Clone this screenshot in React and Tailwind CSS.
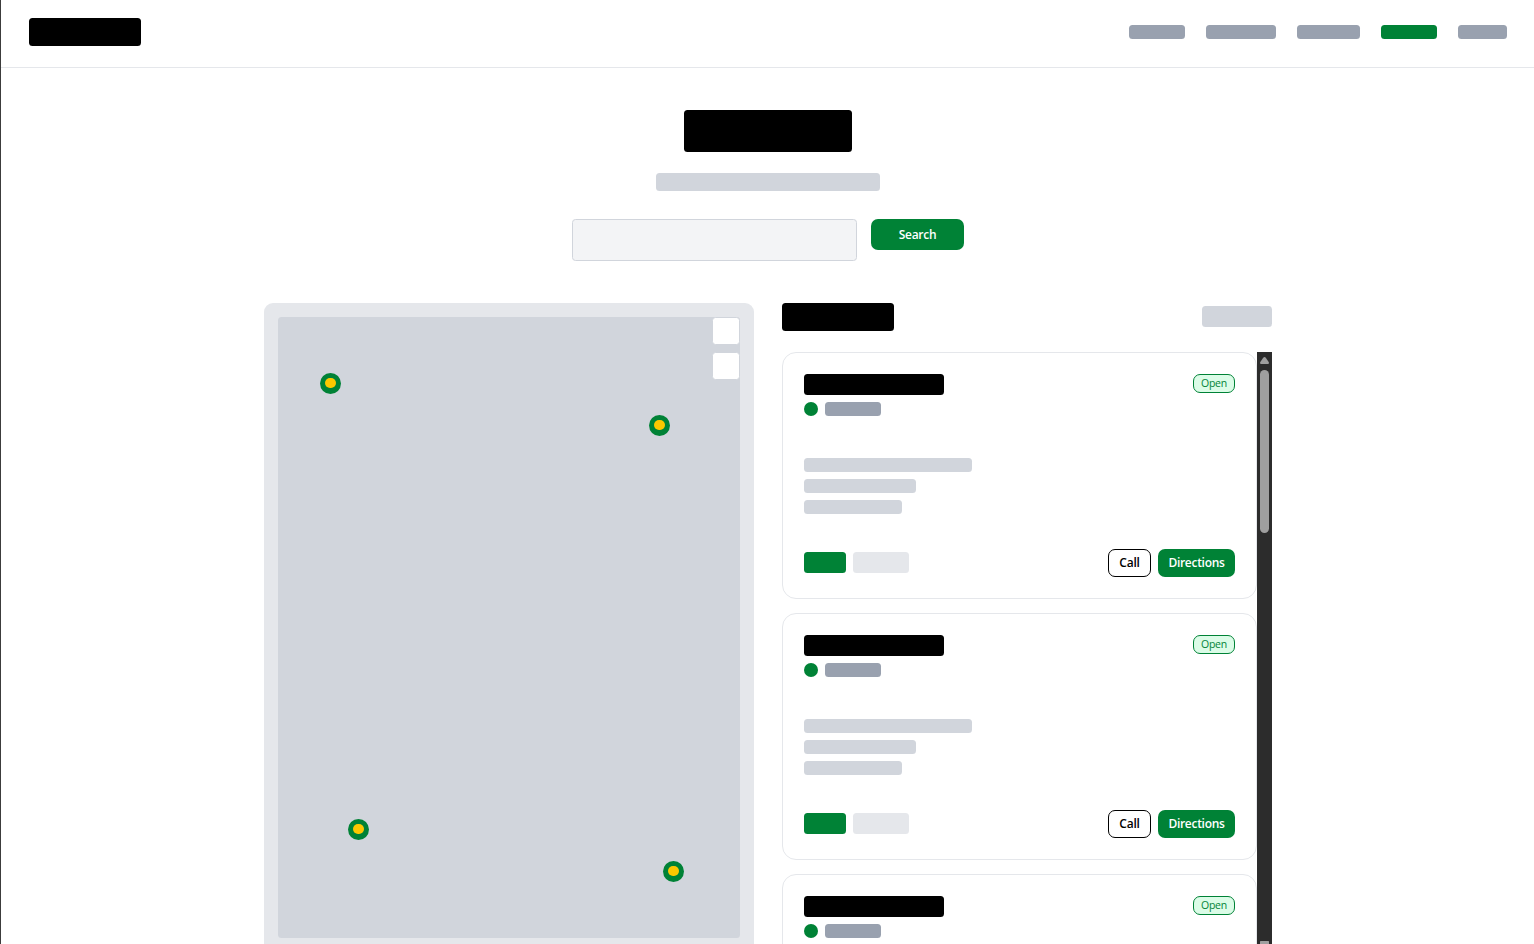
const pins = [
  "left-[42px] top-[56px]",
  "left-[371px] top-[98px]",
  "left-[70px] top-[502px]",
  "left-[385px] top-[544px]",
];

function Header() {
  return (
    <header className="flex h-[68px] shrink-0 items-start justify-between border-b border-gray-200 px-7 pt-[18px]">
      <div className="h-7 w-28 rounded-[3.5px] bg-black" />
      <nav className="flex h-7 items-center gap-[21px]">
        <div className="h-3.5 w-14 rounded-[3.5px] bg-gray-400" />
        <div className="h-3.5 w-[70px] rounded-[3.5px] bg-gray-400" />
        <div className="h-3.5 w-[63px] rounded-[3.5px] bg-gray-400" />
        <div className="h-3.5 w-14 rounded-[3.5px] bg-green-700" />
        <div className="h-3.5 w-[49px] rounded-[3.5px] bg-gray-400" />
      </nav>
    </header>
  );
}

function Hero() {
  return (
    <section className="flex flex-col items-center pt-[42px]">
      <div className="h-[42px] w-[168px] rounded-[3.5px] bg-black" />
      <div className="mt-[21px] h-[18px] w-56 rounded-[3.5px] bg-gray-300" />
      <div className="mt-7 flex items-start gap-3.5">
        <div className="h-[42px] w-[285px] rounded-[3.5px] border border-gray-300 bg-gray-100" />
        <button className="flex h-[31px] w-[93px] items-center justify-center rounded-[7px] bg-green-700 pt-px text-[12px] font-semibold tracking-[-0.3px] text-white">
          Search
        </button>
      </div>
    </section>
  );
}

function StoreMap() {
  return (
    <div className="h-[649px] w-[490px] rounded-[9px] bg-gray-200 p-3.5">
      <div className="relative flex h-[621px] flex-col items-end gap-[7px] rounded-[3.5px] bg-gray-300">
        <div className="size-7 rounded-[3.5px] border border-gray-300 bg-white" />
        <div className="size-7 rounded-[3.5px] border border-gray-300 bg-white" />
        {pins.map((place) => (
          <div key={place} className={"absolute size-[21px] rounded-full bg-green-700 pt-[5px] pl-[5px] " + place}>
            <div className="h-[10px] w-[11px] rounded-full bg-[#fcc800]" />
          </div>
        ))}
      </div>
    </div>
  );
}

function StoreActions() {
  return (
    <div className="mt-[35px] flex items-start justify-between">
      <div className="flex gap-[7px] pt-[3px]">
        <div className="h-[21px] w-[42px] rounded-[3.5px] bg-green-700" />
        <div className="h-[21px] w-14 rounded-[3.5px] bg-gray-200" />
      </div>
      <div className="flex gap-[7px]">
        <button className="flex h-7 w-[43px] items-center justify-center rounded-[7px] border border-black text-[12px] font-semibold tracking-[-0.2px] text-black">
          Call
        </button>
        <button className="flex h-7 w-[77px] items-center justify-center rounded-[7px] bg-green-700 text-[12px] font-semibold tracking-[-0.3px] text-white">
          Directions
        </button>
      </div>
    </div>
  );
}

function StoreCard({ actions = true }) {
  return (
    <article className="flex h-[247px] shrink-0 flex-col rounded-[14px] border border-gray-200 p-[21px]">
      <div className="flex items-start justify-between">
        <div>
          <div className="h-[21px] w-[140px] rounded-[3.5px] bg-black" />
          <div className="mt-[7px] flex gap-[7px]">
            <div className="size-3.5 rounded-full bg-green-700" />
            <div className="h-3.5 w-14 rounded-[3.5px] bg-gray-400" />
          </div>
        </div>
        <span className="flex h-[19px] w-[42px] items-center justify-center rounded-[7px] border border-green-700 bg-green-100 text-[10.5px] font-medium tracking-[-0.25px] text-green-700">
          Open
        </span>
      </div>
      <div className="mt-[42px] flex flex-col gap-[7px]">
        <div className="h-3.5 w-[168px] rounded-[3.5px] bg-gray-300" />
        <div className="h-3.5 w-28 rounded-[3.5px] bg-gray-300" />
        <div className="h-3.5 w-[98px] rounded-[3.5px] bg-gray-300" />
      </div>
      {actions && <StoreActions />}
    </article>
  );
}

function Scrollbar() {
  return (
    <div className="flex w-[15px] flex-col items-center bg-[#2c2c2c] pt-[5px]">
      <svg width="9" height="7" viewBox="0 0 9 7" fill="#9f9f9f">
        <path d="M3.2.8Q4.5-.7 5.8.8L8.7 5Q9.4 7 8 7H1Q-.4 7 .3 5Z" />
      </svg>
      <div className="mt-1.5 h-[163px] w-[9px] rounded-full bg-[#9f9f9f]" />
      <svg className="mt-[408px]" width="9" height="7" viewBox="0 0 9 7" fill="#9f9f9f">
        <path d="M.5 0H8.5Q9.4 0 9 3L5.8 6.2Q4.5 7.7 3.2 6.2L0 3Q-.4 0 .5 0Z" />
      </svg>
    </div>
  );
}

function Results() {
  return (
    <div className="w-[490px]">
      <div className="flex h-7 items-start justify-between">
        <div className="h-7 w-28 rounded-[3.5px] bg-black" />
        <div className="mt-[3px] h-[21px] w-[70px] rounded-[3.5px] bg-gray-300" />
      </div>
      <div className="mt-[21px] flex h-[600px] overflow-hidden">
        <div className="flex w-[475px] flex-col gap-3.5">
          <StoreCard />
          <StoreCard />
          <StoreCard actions={false} />
        </div>
        <Scrollbar />
      </div>
    </div>
  );
}

export default function App() {
  return (
    <div className="h-[944px] overflow-hidden border-l border-[#3c3c3c] bg-white font-['Open_Sans','Noto_Sans',sans-serif]">
      <div className="flex w-[1534px] flex-col">
        <Header />
        <Hero />
        <main className="mt-[42px] flex justify-center gap-7">
          <StoreMap />
          <Results />
        </main>
      </div>
    </div>
  );
}
